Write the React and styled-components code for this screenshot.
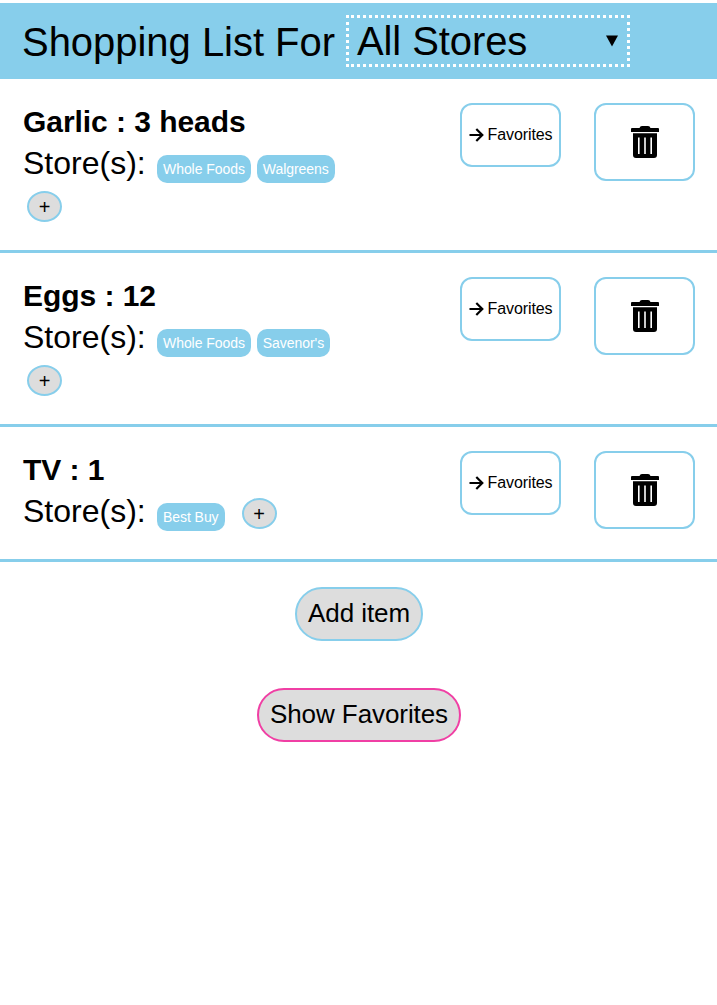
import React from "react";
import styled, { createGlobalStyle } from "styled-components";

const GlobalStyle = createGlobalStyle`
  * { box-sizing: border-box; }
  body {
    margin: 0;
    background: #fff;
    color: #000;
    font-family: Arial, "Liberation Sans", sans-serif;
  }
  button { font-family: inherit; color: inherit; cursor: pointer; }
`;

const Page = styled.main`
  padding-top: 3px;
  min-height: 1005px;
`;

const Header = styled.header`
  display: flex;
  align-items: flex-start;
  height: 76px;
  padding: 12px 0 0 22px;
  background: skyblue;
  font-size: 40px;
`;

const Title = styled.h1`
  width: 313px;
  margin: 4px 11px 0 0;
  font-size: inherit;
  font-weight: 400;
  letter-spacing: -0.03px;
  line-height: 46px;
  white-space: nowrap;
`;

const StoreSelect = styled.button`
  display: flex;
  align-items: center;
  justify-content: space-between;
  width: 284px;
  height: 52px;
  padding: 0 9px 0 8px;
  border: 3px dotted #fff;
  background: transparent;
  font-size: 40px;
  letter-spacing: -0.1px;
  line-height: 46px;
`;

const Caret = styled.svg`
  width: 12px;
  height: 12px;
`;

const Item = styled.section`
  display: flex;
  align-items: flex-start;
  height: ${(p) => (p.$short ? 135 : 174)}px;
  padding: 24px 22px 0 23px;
  border-bottom: 3px solid skyblue;
`;

const Details = styled.div`
  width: 330px;
  margin-right: auto;
`;

const ItemName = styled.h2`
  margin: 1px 0 0;
  font-size: 30px;
  letter-spacing: -0.05px;
  line-height: 35px;
`;

const Stores = styled.div`
  display: flex;
  flex-wrap: wrap;
  align-items: flex-start;
`;

const StoresLabel = styled.span`
  width: 134px;
  margin-top: 6px;
  font-size: 32px;
  line-height: 37px;
`;

const Tag = styled.span`
  margin: 16px 6px 0 0;
  padding: 0 6px;
  border-radius: 10px;
  background: skyblue;
  color: #fff;
  font-size: 14px;
  letter-spacing: -0.06px;
  line-height: 28px;
  white-space: nowrap;
`;

const AddStore = styled.button`
  width: 35px;
  height: 31px;
  margin: ${(p) => (p.$inline ? "11px 0 0 11px" : "8px 0 0 4px")};
  padding: 0;
  border: 2px solid skyblue;
  border-radius: 50%;
  background: #ddd;
  font-size: 20px;
  line-height: 26px;
`;

const OutlineButton = styled.button`
  display: flex;
  align-items: center;
  justify-content: center;
  gap: 4px;
  flex: none;
  width: 101px;
  height: ${(p) => p.$height}px;
  margin-left: ${(p) => p.$gap || 0}px;
  padding: 0;
  border: 2px solid skyblue;
  border-radius: 12px;
  background: #fff;
  font-size: 16px;
  letter-spacing: -0.1px;
`;

const Actions = styled.div`
  display: flex;
  flex-direction: column;
  align-items: center;
  gap: 47px;
  padding: 25px 0 0 1px;
`;

const Pill = styled.button`
  height: 54px;
  padding: 0 11px 1px;
  border: 2px solid ${(p) => p.$color};
  border-radius: 27px;
  background: #ddd;
  font-size: 26px;
  letter-spacing: -0.08px;
`;

const ArrowIcon = () => (
  <svg width="15" height="14" viewBox="0 0 15 14" fill="none" stroke="#000" strokeWidth="2.2">
    <path d="M0.5 7H13M7.3 1L13.3 7L7.3 13" />
  </svg>
);

const TrashIcon = () => (
  <svg width="28" height="32" viewBox="0 0 28 32">
    <path d="M8.5 2Q9 0 11 0H17Q19 0 19.5 2H27Q28 2 28 3V6H0V3Q0 2 1 2Z" />
    <path
      fillRule="evenodd"
      d="M2 7.3H26V29Q26 32 23 32H5Q2 32 2 29ZM7 11.5V28H8.6V11.5ZM13.2 11.5V28H14.8V11.5ZM19.4 11.5V28H21V11.5Z"
    />
  </svg>
);

const items = [
  { name: "Garlic", amount: "3 heads", stores: ["Whole Foods", "Walgreens"] },
  { name: "Eggs", amount: "12", stores: ["Whole Foods", "Savenor's"] },
  { name: "TV", amount: "1", stores: ["Best Buy"] },
];

export default function App() {
  return (
    <>
      <GlobalStyle />
      <Page>
        <Header>
          <Title>Shopping List For</Title>
          <StoreSelect>
            All Stores
            <Caret viewBox="0 0 13 12">
              <path d="M0 0H13L6.5 12Z" />
            </Caret>
          </StoreSelect>
        </Header>
        {items.map(({ name, amount, stores }) => {
          const single = stores.length === 1;
          return (
            <Item key={name} $short={single}>
              <Details>
                <ItemName>{name} : {amount}</ItemName>
                <Stores>
                  <StoresLabel>Store(s):</StoresLabel>
                  {stores.map((store) => <Tag key={store}>{store}</Tag>)}
                  <AddStore $inline={single}>+</AddStore>
                </Stores>
              </Details>
              <OutlineButton $height={64}><ArrowIcon />Favorites</OutlineButton>
              <OutlineButton $height={78} $gap={33} aria-label="Delete"><TrashIcon /></OutlineButton>
            </Item>
          );
        })}
        <Actions>
          <Pill $color="skyblue">Add item</Pill>
          <Pill $color="#f03fa4">Show Favorites</Pill>
        </Actions>
      </Page>
    </>
  );
}
